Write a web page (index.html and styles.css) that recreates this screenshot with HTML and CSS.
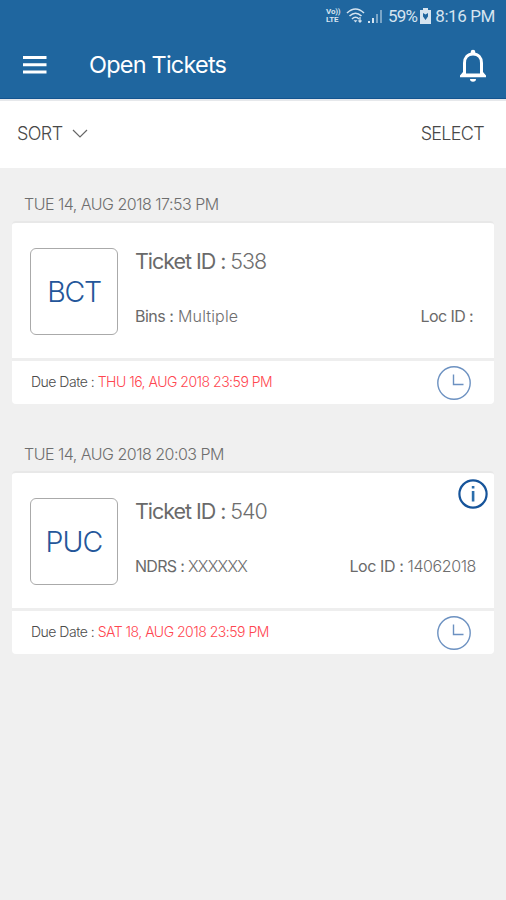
FILE: index.html
```html
<!DOCTYPE html>
<html lang="en">
<head>
<meta charset="utf-8">
<title>Open Tickets</title>
<link rel="stylesheet" href="styles.css">
</head>
<body>
<header class="header">
  <div class="status">
    <span class="volte"><span>Vo))</span><span>LTE</span></span>
    <svg class="wifi" width="20" height="18" viewBox="0 0 20 18" fill="none" stroke="currentColor" stroke-width="1.6"><path d="M1 6Q9.500 -2 18 6M3.500 9Q9.500 3.500 15.500 9M6 12Q9.500 8.500 13 12"/><path d="M7.500 13.200L9.500 15.500L11.500 13.200Z" fill="currentColor" stroke="none"/><path d="M14 10V15M12.500 13.500L14 15.200L15.500 13.500" stroke-width="1.200"/></svg>
    <svg class="signal" width="15" height="15" viewBox="0 0 15 15" fill="currentColor"><path d="M0 12h2v2H0zM4 9h2v5H4z"/><path d="M8 5h2v9H8zM12 1h2v13h-2z" opacity=".5"/></svg>
    <span class="percent">59%</span>
    <svg class="battery" width="11" height="16" viewBox="0 0 11 16"><path d="M3 0h5v2h3v14H0V2h3z" fill="currentColor"/><path d="M3 5l2.500 1.500L8 5v3.500L5.500 12 3 8.500z" fill="#1f669f"/></svg>
    <span class="time">8:16 PM</span>
  </div>
  <div class="bar">
    <svg class="menu" width="24" height="18" viewBox="0 0 24 18" fill="currentColor"><path d="M0 0h23.500v3H0zM0 7.200h23.500v3H0zM0 14.400h23.500v3H0z"/></svg>
    <h1 class="title">Open Tickets</h1>
    <svg class="bell" width="28" height="33" viewBox="0 0 28 33"><path d="M5.500 26V14C5.500 8.500 8.500 5 14 5S22.500 8.500 22.500 14V26" fill="none" stroke="currentColor" stroke-width="3"/><path d="M11.700 5V3a2.300 2.300 0 0 1 4.600 0v2zM1 28.200V26.500L4 23h20l3 3.500v1.700zM11 30h6a3 2.700 0 0 1-6 0z" fill="currentColor"/><path d="M7 14h14v10.500H7z" fill="#1f669f"/></svg>
  </div>
</header>
<nav class="tools">
  <span class="sort">SORT</span>
  <svg class="chevron" width="16" height="10" viewBox="0 0 16 10" fill="none" stroke="#666" stroke-width="1.200"><path d="M1 1L8 8L15 1"/></svg>
  <span class="select">SELECT</span>
</nav>
<main class="list">
  <h2 class="date date-first">TUE 14, AUG 2018 17:53 PM</h2>
  <article class="card">
    <div class="main">
      <div class="code"><span class="bct">BCT</span></div>
      <div class="details">
        <div class="ticket"><b>Ticket ID :</b> 538</div>
        <div class="row"><span class="bins"><b>Bins :</b> Multiple</span><span class="loc loc-empty"><b>Loc ID :</b></span></div>
      </div>
    </div>
    <div class="due">
      <span class="due-text">Due Date : <em class="due-thu">THU 16, AUG 2018 23:59 PM</em></span>
      <svg class="clock" width="34" height="34" viewBox="0 0 34 34" fill="none" stroke="#6c91c1" stroke-width="1.400"><circle cx="17" cy="17" r="16.200"/><path d="M16.500 8.500V18.500H26.500"/></svg>
    </div>
  </article>
  <h2 class="date date-second">TUE 14, AUG 2018 20:03 PM</h2>
  <article class="card">
    <svg class="info" width="30" height="30" viewBox="0 0 30 30"><circle cx="15" cy="15" r="13.600" fill="none" stroke="#16549a" stroke-width="2.200"/><path d="M13.800 7h2.600v2.600h-2.600zM13.800 12h2.600v10.500h-2.600z" fill="#2a6dab"/></svg>
    <div class="main">
      <div class="code"><span class="puc">PUC</span></div>
      <div class="details">
        <div class="ticket"><b>Ticket ID :</b> 540</div>
        <div class="row"><span class="ndrs"><b>NDRS :</b> XXXXXX</span><span class="loc"><b>Loc ID :</b> 14062018</span></div>
      </div>
    </div>
    <div class="due">
      <span class="due-text">Due Date : <em class="due-sat">SAT 18, AUG 2018 23:59 PM</em></span>
      <svg class="clock" width="34" height="34" viewBox="0 0 34 34" fill="none" stroke="#6c91c1" stroke-width="1.400"><circle cx="17" cy="17" r="16.200"/><path d="M16.500 8.500V18.500H26.500"/></svg>
    </div>
  </article>
</main>
</body>
</html>
```

FILE: styles.css
```css
* { box-sizing: border-box; }
body { margin: 0; min-height: 900px; background: #f0f0f0; color: #6e6e6e; font-family: Inter, Roboto, sans-serif; font-weight: 300; }
svg { display: block; flex: none; }
h1, h2 { margin: 0; font-weight: 300; }
b { font-weight: 400; color: #6a6a6a; }
span, em, .ticket { white-space: nowrap; }
.header { height: 99px; background: #1f669f; border-bottom: 1px solid #13548f; color: #fff; }
.status { display: flex; align-items: center; height: 32px; padding-right: 11px; justify-content: flex-end; color: #d5e4f0; font: 400 17px/20px Roboto, sans-serif; }
.volte { display: flex; flex-direction: column; width: 15px; margin-right: 5px; font-size: 8px; line-height: 8px; font-weight: 700; letter-spacing: -.2px; }
.wifi { margin-right: 2px; }
.signal { margin-right: 5px; }
.percent { margin-right: 3px; letter-spacing: -.8px; }
.battery { margin-right: 4px; }
.time { letter-spacing: -.4px; }
.bar { display: flex; align-items: center; height: 66px; padding: 0 19px 0 23px; }
.menu { margin-right: 42px; }
.title { font-size: 23.5px; line-height: 30px; font-weight: 400; letter-spacing: -.8px; }
.bell { margin-left: auto; }
.tools { display: flex; align-items: center; height: 69px; padding: 0 22px 2px 17px; background: #fff; border-top: 2px solid #e6e8eb; color: #484848; font-size: 18px; }
.sort { letter-spacing: -.6px; }
.chevron { margin-left: 9px; }
.select { margin-left: auto; letter-spacing: -.7px; }
.list { padding: 0 12px; }
.date { height: 53px; padding: 26px 12px 0; font-size: 16px; line-height: 20px; letter-spacing: -.5px; }
.date-second { height: 67px; padding-top: 40px; }
.card { position: relative; height: 183px; border-radius: 4px; background: #fff; border-top: 2px solid #e8e8e8; }
.main { display: flex; height: 138px; padding: 25px 18px 0; border-bottom: 3px solid #eee; }
.code { display: grid; place-items: center; width: 88px; height: 87px; border: 1px solid #aaa; border-radius: 6px; color: #24569a; font-size: 28.5px; }
.bct { letter-spacing: -1.3px; }
.puc { letter-spacing: -.9px; }
.details { flex: 1; padding-left: 17px; }
.ticket { font-size: 21.5px; line-height: 28px; margin-top: -1px; letter-spacing: -1.05px; }
.row { display: flex; justify-content: space-between; margin-top: 29px; font-size: 16px; line-height: 24px; letter-spacing: -.5px; }
.bins { letter-spacing: .15px; }
.bins b { letter-spacing: -.5px; }
.ndrs { letter-spacing: -.7px; }
.loc { letter-spacing: -.4px; }
.loc-empty { padding-right: 3px; letter-spacing: -.6px; }
.due { display: flex; align-items: center; justify-content: space-between; height: 43px; padding: 0 23px 0 19px; }
.due-text { margin-top: -2px; font-size: 14px; letter-spacing: -.5px; color: #4b4b4b; }
em { font-style: normal; color: #ff4650; }
.info { position: absolute; top: 6px; right: 6px; }
```
